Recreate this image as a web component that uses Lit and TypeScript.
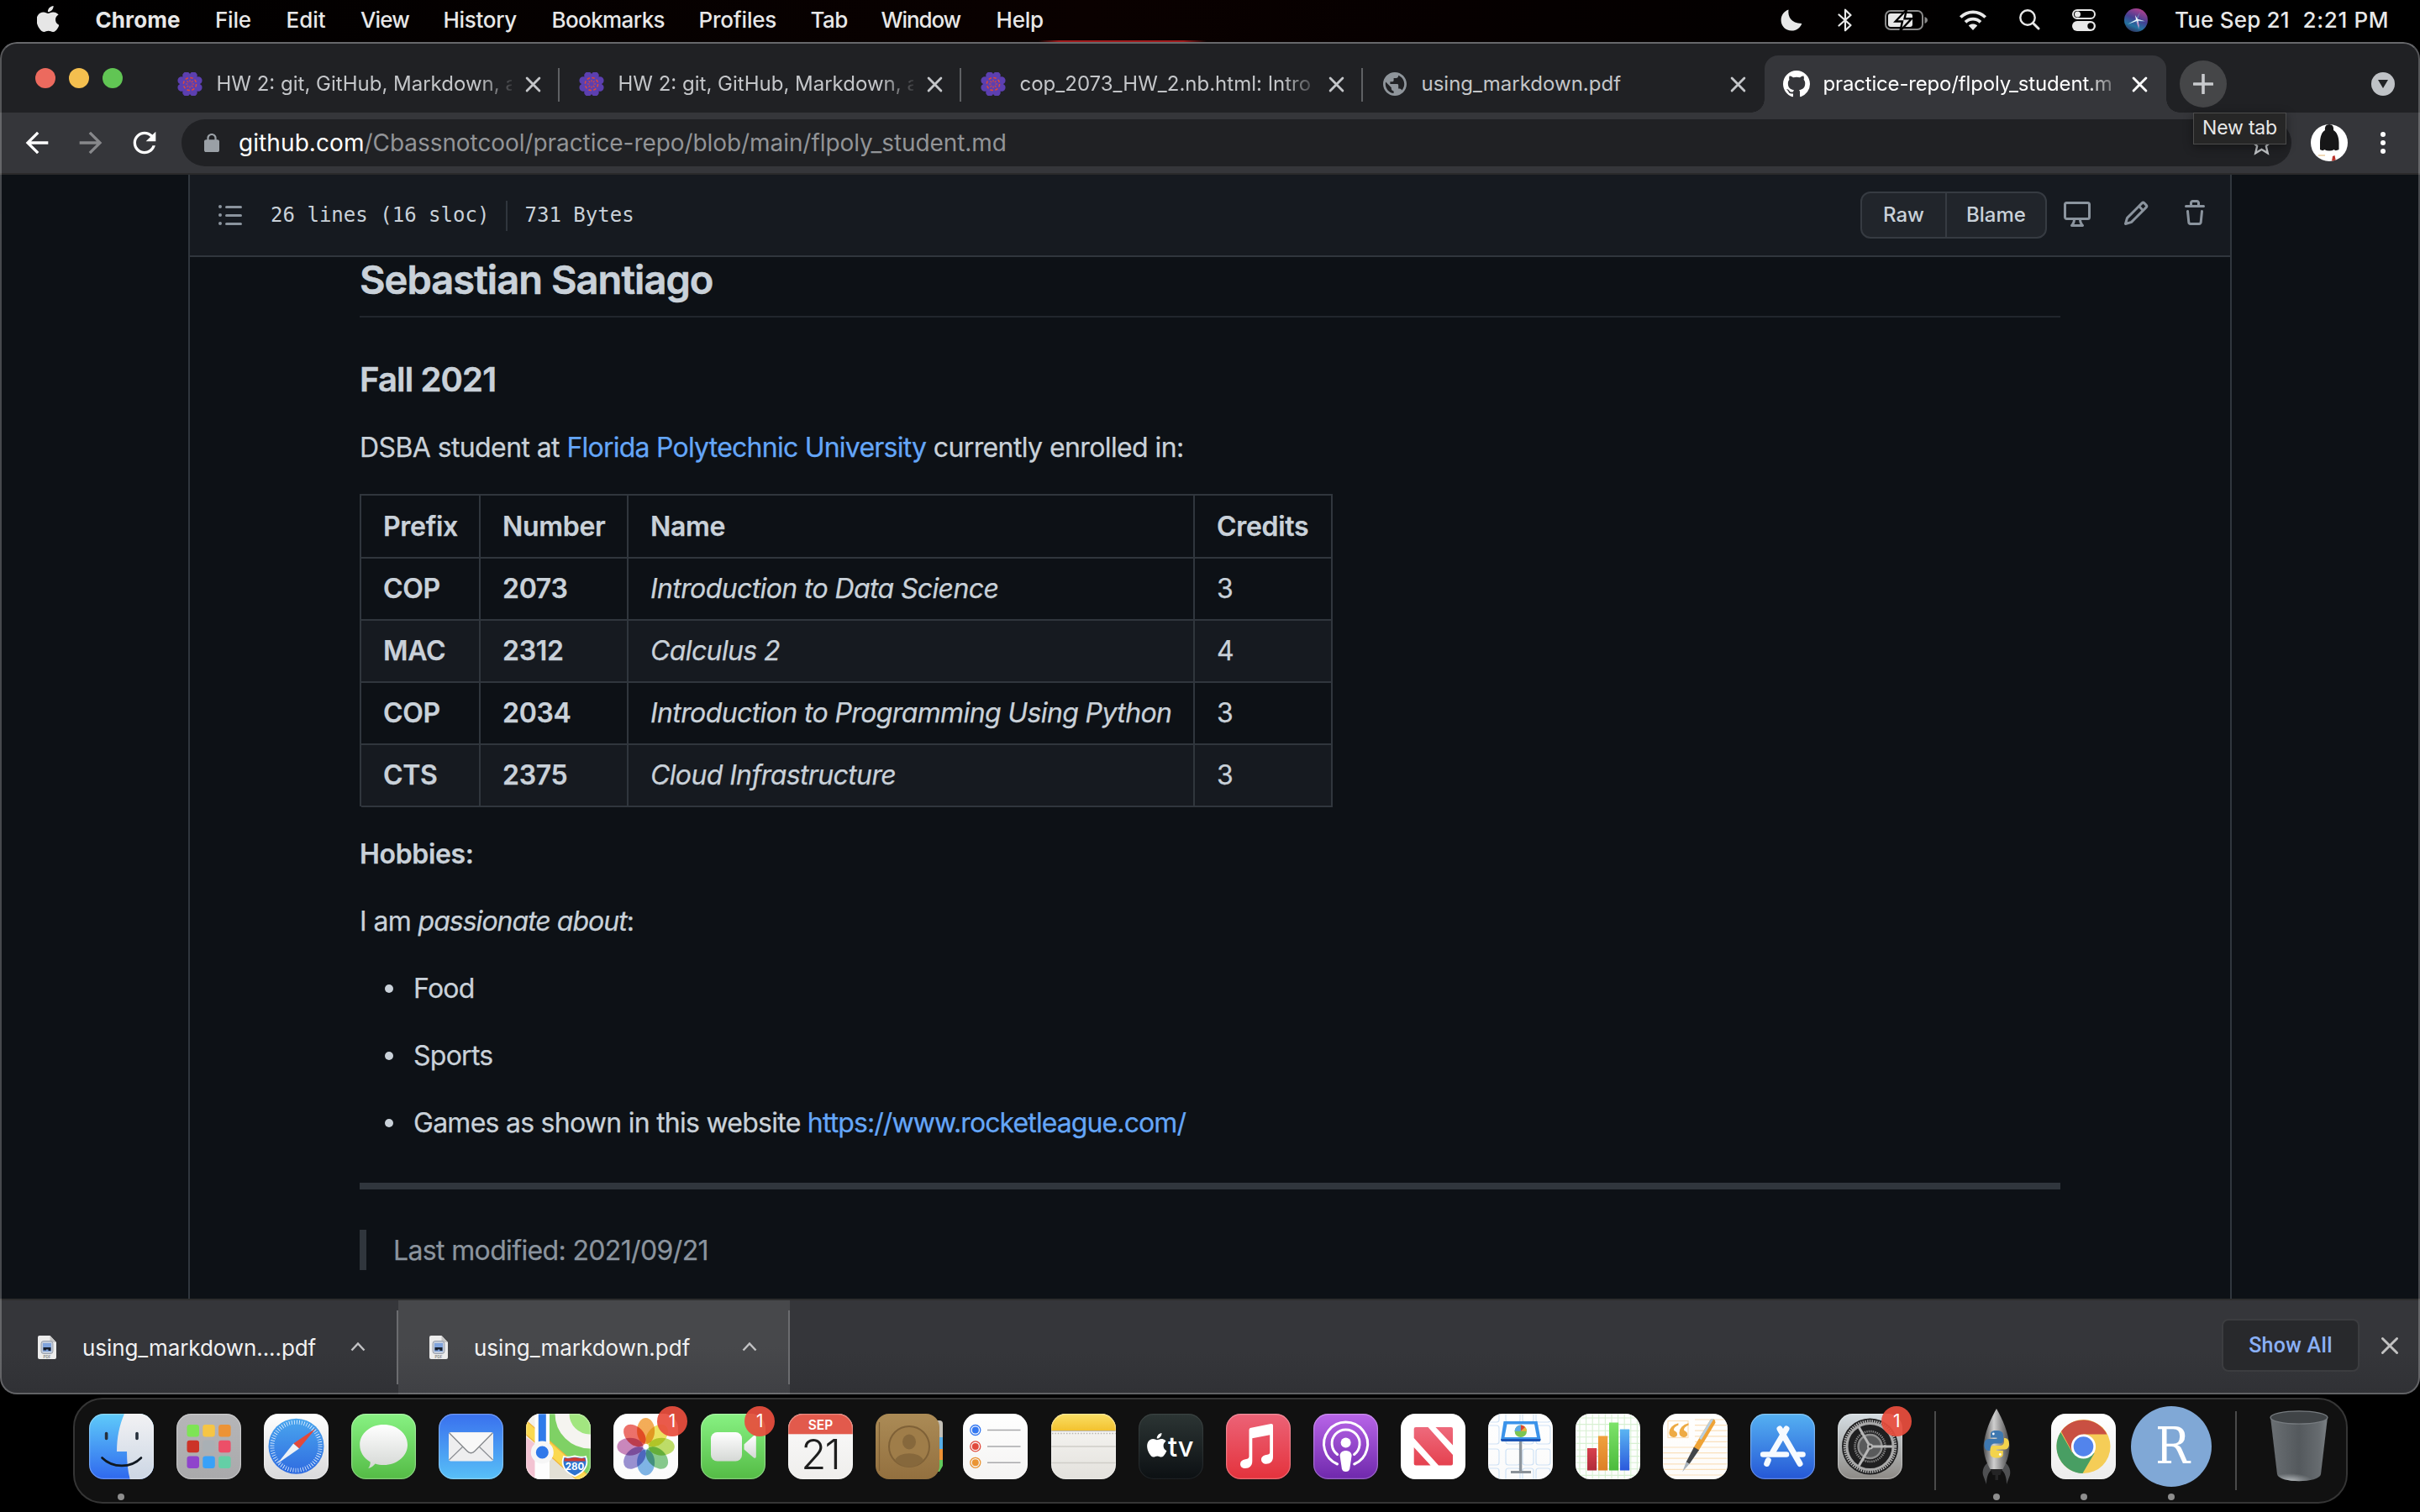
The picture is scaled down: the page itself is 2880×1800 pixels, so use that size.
import { LitElement, html, svg, css, nothing, type TemplateResult } from "lit";
import { customElement } from "lit/decorators.js";
import { classMap } from "lit/directives/class-map.js";
import { styleMap } from "lit/directives/style-map.js";

const APPLE =
  "M12.152 6.896c-.948 0-2.415-1.078-3.96-1.04-2.04.027-3.91 1.183-4.961 3.014-2.117 3.675-.546 9.103 1.519 12.09 1.013 1.454 2.208 3.09 3.792 3.039 1.52-.065 2.09-.987 3.935-.987 1.831 0 2.35.987 3.96.948 1.637-.026 2.676-1.48 3.676-2.948 1.156-1.688 1.636-3.325 1.662-3.415-.039-.013-3.182-1.221-3.22-4.857-.026-3.04 2.48-4.494 2.597-4.559-1.429-2.09-3.623-2.324-4.39-2.376-2-.156-3.675 1.09-4.61 1.09zM15.53 3.83c.843-1.012 1.4-2.427 1.245-3.83-1.207.052-2.662.805-3.532 1.818-.78.896-1.454 2.338-1.273 3.714 1.338.104 2.715-.688 3.559-1.701";
const GITHUB =
  "M8 0C3.58 0 0 3.58 0 8c0 3.54 2.29 6.53 5.47 7.59.4.07.55-.17.55-.38 0-.19-.01-.82-.01-1.49-2.01.37-2.53-.49-2.69-.94-.09-.23-.48-.94-.82-1.13-.28-.15-.68-.52-.01-.53.63-.01 1.08.58 1.23.82.72 1.21 1.87.87 2.33.66.07-.52.28-.87.51-1.07-1.78-.2-3.64-.89-3.64-3.95 0-.87.31-1.59.82-2.15-.08-.2-.36-1.02.08-2.12 0 0 .67-.21 2.2.82.64-.18 1.32-.27 2-.27.68 0 1.36.09 2 .27 1.53-1.04 2.2-.82 2.2-.82.44 1.1.16 1.92.08 2.12.51.56.82 1.27.82 2.15 0 3.07-1.87 3.75-3.65 3.95.29.25.54.73.54 1.48 0 1.07-.01 1.93-.01 2.2 0 .21.15.46.55.38A8.013 8.013 0 0016 8c0-4.42-3.58-8-8-8z";
const LIST =
  "M2 4a1 1 0 100-2 1 1 0 000 2zm3.75-1.5a.75.75 0 000 1.5h8.5a.75.75 0 000-1.5h-8.5zm0 5a.75.75 0 000 1.5h8.5a.75.75 0 000-1.5h-8.5zm0 5a.75.75 0 000 1.5h8.5a.75.75 0 000-1.5h-8.5zM3 8a1 1 0 11-2 0 1 1 0 012 0zm-1 6a1 1 0 100-2 1 1 0 000 2z";
const DESKTOP =
  "M1.75 2.5h12.5a.25.25 0 01.25.25v7.5a.25.25 0 01-.25.25H1.75a.25.25 0 01-.25-.25v-7.5a.25.25 0 01.25-.25zM14.25 1H1.75A1.75 1.75 0 000 2.75v7.5C0 11.216.784 12 1.75 12h3.727c-.1 1.041-.52 1.872-1.292 2.757A.75.75 0 004.75 16h6.5a.75.75 0 00.565-1.243c-.772-.885-1.193-1.716-1.292-2.757h3.727A1.75 1.75 0 0016 10.25v-7.5A1.75 1.75 0 0014.25 1zM9.018 12H6.982a5.72 5.72 0 01-.765 2.5h3.566a5.72 5.72 0 01-.765-2.5z";
const PENCIL =
  "M11.013 1.427a1.75 1.75 0 012.474 0l1.086 1.086a1.75 1.75 0 010 2.474l-8.61 8.61c-.21.21-.47.364-.756.445l-3.251.93a.75.75 0 01-.927-.928l.929-3.25a1.75 1.75 0 01.445-.758l8.61-8.61zm1.414 1.06a.25.25 0 00-.354 0L10.811 3.75l1.439 1.44 1.263-1.263a.25.25 0 000-.354l-1.086-1.086zM11.189 6.25L9.75 4.81l-6.286 6.287a.25.25 0 00-.064.108l-.558 1.953 1.953-.558a.249.249 0 00.108-.064l6.286-6.286z";
const TRASH =
  "M6.5 1.75a.25.25 0 01.25-.25h2.5a.25.25 0 01.25.25V3h-3V1.75zm4.5 0V3h2.25a.75.75 0 010 1.5H2.75a.75.75 0 010-1.5H5V1.75C5 .784 5.784 0 6.75 0h2.5C10.216 0 11 .784 11 1.75zM4.496 6.675a.75.75 0 10-1.492.15l.66 6.6A1.75 1.75 0 005.405 15h5.19c.9 0 1.652-.681 1.741-1.576l.66-6.6a.75.75 0 00-1.492-.149l-.66 6.6a.25.25 0 01-.249.225h-5.19a.25.25 0 01-.249-.225l-.66-6.6z";
const GLOBE =
  "M12 2C6.48 2 2 6.48 2 12s4.48 10 10 10 10-4.48 10-10S17.52 2 12 2zm-1 17.93c-3.95-.49-7-3.85-7-7.93 0-.62.08-1.21.21-1.79L9 15v1c0 1.1.9 2 2 2v1.93zm6.9-2.54c-.26-.81-1-1.39-1.9-1.39h-1v-3c0-.55-.45-1-1-1H8v-2h2c.55 0 1-.45 1-1V7h2c1.1 0 2-.9 2-2v-.41c2.93 1.19 5 4.06 5 7.41 0 2.08-.8 3.97-2.1 5.39z";
const BACK = "M20 11H7.83l5.59-5.59L12 4l-8 8 8 8 1.41-1.41L7.83 13H20v-2z";
const FORWARD = "M12 4l-1.41 1.41L16.17 11H4v2h12.17l-5.58 5.59L12 20l8-8z";
const RELOAD =
  "M17.65 6.35C16.2 4.9 14.21 4 12 4c-4.42 0-7.99 3.58-7.99 8s3.57 8 7.99 8c3.73 0 6.84-2.55 7.73-6h-2.08c-.82 2.33-3.04 4-5.65 4-3.31 0-6-2.69-6-6s2.69-6 6-6c1.66 0 3.14.69 4.22 1.78L13 11h7V4l-2.35 2.35z";
const LOCK =
  "M18 8h-1V6c0-2.76-2.24-5-5-5S7 3.24 7 6v2H6c-1.1 0-2 .9-2 2v10c0 1.1.9 2 2 2h12c1.1 0 2-.9 2-2V10c0-1.1-.9-2-2-2zM9 6c0-1.66 1.34-3 3-3s3 1.34 3 3v2H9V6z";
const STAR =
  "M22 9.24l-7.19-.62L12 2 9.19 8.63 2 9.24l5.46 4.73L5.82 21 12 17.27 18.18 21l-1.63-7.03L22 9.24zM12 15.4l-3.76 2.27 1-4.28-3.32-2.88 4.38-.38L12 6.1l1.71 4.04 4.38.38-3.32 2.88 1 4.28L12 15.4z";

const glyph = (d: string, size: number, box = "0 0 24 24") =>
  html`<svg class="glyph" width=${size} height=${size} viewBox=${box}><path d=${d} fill="currentColor" fill-rule="evenodd"></path></svg>`;

const cross = (size: number, stroke: number) =>
  html`<svg class="glyph" width=${size} height=${size} viewBox="0 0 18 18"><path d="M2 2L16 16M16 2L2 16" stroke="currentColor" stroke-width=${stroke} stroke-linecap="round"></path></svg>`;

const ray = (n: number, fn: (angle: number, i: number) => unknown) =>
  Array.from({ length: n }, (_, i) => fn((360 / n) * i, i));

const grad = (id: string, from: string, to: string) => svg`
  <linearGradient id=${id} x1="0" y1="0" x2="0" y2="1">
    <stop offset="0" stop-color=${from}></stop><stop offset="1" stop-color=${to}></stop>
  </linearGradient>`;

const canvasIcon = html`<svg class="glyph" width="32" height="28" viewBox="-16 -14 32 28">
  <g fill="#5c3fb0">
    <circle r="11"></circle>
    ${ray(8, (a) => svg`<circle cx="10.800" cy="0" r="4.600" transform="rotate(${a + 22.5})"></circle>`)}
  </g>
  <g fill="none" stroke="#dd4a3a" stroke-width="1.500">
    <circle r="7.600" stroke-dasharray="3.600 2.370"></circle>
    ${ray(8, (a) => svg`<path d="M2.500 0H5" stroke-width="1.100" transform="rotate(${a})"></path>`)}
  </g>
</svg>`;

interface MenuItem { label: string; width: number; spacing?: number }
const MENU: MenuItem[] = [
  { label: "Chrome", width: 142.5, spacing: 0.1 },
  { label: "File", width: 84.5, spacing: -0.2 },
  { label: "Edit", width: 88.5, spacing: 0 },
  { label: "View", width: 98.5, spacing: -0.9 },
  { label: "History", width: 129, spacing: -0.3 },
  { label: "Bookmarks", width: 175, spacing: -0.6 },
  { label: "Profiles", width: 133, spacing: -0.2 },
  { label: "Tab", width: 84, spacing: -0.6 },
  { label: "Window", width: 137, spacing: -1.1 },
  { label: "Help", width: 70, spacing: -0.2 },
];

const STATUS: { width: number; art: TemplateResult }[] = [
  { width: 64, art: html`<svg width="26" height="26" viewBox="0 0 26 26"><path d="M9.5.6C8.4 8.900 12.500 17 25.300 16.900C23.500 22.300 18.900 25.500 13.200 25.500C6 25.500.6 20 .6 13C.6 7.300 4 2.500 9.500.6z" fill="#e8e8e8"></path></svg>` },
  { width: 64, art: html`<svg width="18" height="28" viewBox="0 0 18 28"><path d="M1.500 7.500L15.500 20L9 26.300V1.700L15.500 8L1.500 20.500" fill="none" stroke="#e8e8e8" stroke-width="2.200" stroke-linejoin="round" stroke-linecap="round"></path></svg>` },
  { width: 82, art: html`<svg width="52" height="28" viewBox="0 0 52 28">
      <rect x="1" y="3" width="44" height="22" rx="6" fill="none" stroke="#8a8a8a" stroke-width="2"></rect>
      <path d="M47.500 10v8c2.200-.8 3.500-2.200 3.500-4s-1.300-3.200-3.500-4z" fill="#8a8a8a"></path>
      <rect x="4" y="6" width="29" height="16" rx="3" fill="#e8e8e8"></rect>
      <path d="M26 1.500L12.800 15.500H21L18.500 26.500L32 12.200H23.500z" fill="#e8e8e8" stroke="#000" stroke-width="2.400"></path></svg>` },
  { width: 76, art: html`<svg width="34" height="26" viewBox="0 0 34 26"><g fill="none" stroke="#e8e8e8" stroke-width="3.800">
      <path d="M2.300 9.500C10.500 1.200 23.500 1.200 31.700 9.500"></path><path d="M8 15.300C13 10.300 21 10.300 26 15.300"></path></g>
      <path d="M17 25L11.800 19.400C14.800 16.800 19.200 16.800 22.200 19.400z" fill="#e8e8e8"></path></svg>` },
  { width: 58, art: html`<svg width="25" height="25" viewBox="0 0 25 25"><g fill="none" stroke="#e8e8e8" stroke-linecap="round"><circle cx="10" cy="10" r="8.700" stroke-width="2.400"></circle><path d="M16.500 16.500L23 23" stroke-width="3"></path></g></svg>` },
  { width: 72, art: html`<svg width="28" height="26" viewBox="0 0 28 26"><rect x="1" y="1" width="26" height="10" rx="5" fill="none" stroke="#e8e8e8" stroke-width="2"></rect><circle cx="6.500" cy="6" r="3.500" fill="#e8e8e8"></circle>
      <rect x="0" y="14" width="28" height="12" rx="6" fill="#e8e8e8"></rect><circle cx="22" cy="20" r="3.700" fill="#000"></circle></svg>` },
  { width: 52, art: html`<svg width="28" height="28" viewBox="0 0 28 28">
      <defs>
        <linearGradient id="siri" x1=".7" y1="0" x2=".3" y2="1"><stop offset="0" stop-color="#b5408f"></stop><stop offset=".45" stop-color="#443f92"></stop><stop offset=".75" stop-color="#2472a0"></stop><stop offset="1" stop-color="#31305c"></stop></linearGradient>
      </defs>
      <circle cx="14" cy="14" r="14" fill="url(#siri)"></circle>
      <path d="M14 13L3.500 19L14 15.500L17.500 25.500L16.500 15L25.500 16L16 12.500L19 4z" fill="#6fd3e8" opacity=".55"></path>
      <path d="M14 13.500L5 18.500L15 14.800L18 23L16.500 14.500L24 15L16 12.800L13 8z" fill="#fff" opacity=".9"></path>
      <path d="M16 15L18 24.500L15.500 18z" fill="#ee6fb5"></path></svg>` },
];

interface TabInfo { title: string; icon: TemplateResult; fade: boolean; active?: boolean }
const TABS: TabInfo[] = [
  { title: "HW 2: git, GitHub, Markdown, a", icon: canvasIcon, fade: true },
  { title: "HW 2: git, GitHub, Markdown, a", icon: canvasIcon, fade: true },
  { title: "cop_2073_HW_2.nb.html: Intro", icon: canvasIcon, fade: true },
  { title: "using_markdown.pdf", icon: glyph(GLOBE, 28, "2 2 20 20"), fade: false },
  { title: "practice-repo/flpoly_student.m", icon: glyph(GITHUB, 32, "0 0 16 16"), fade: true, active: true },
];

const COURSES: [string, string, string, number][] = [
  ["COP", "2073", "Introduction to Data Science", 3],
  ["MAC", "2312", "Calculus 2", 4],
  ["COP", "2034", "Introduction to Programming Using Python", 3],
  ["CTS", "2375", "Cloud Infrastructure", 3],
];

/* Dock artwork is drawn in a 77 x 78 tile. */
const tile = (id: string, from: string, to: string, art: unknown, rim = 0.28) => html`
  <svg class="tile" width="77" height="78" viewBox="0 0 77 78">
    <defs>
      ${grad(`${id}-bg`, from, to)}
      <clipPath id="${id}-clip"><rect width="77" height="78" rx="17.500"></rect></clipPath>
      ${grad(`${id}-sheen`, "#ffffff", "#d5d8d5")}
    </defs>
    <g clip-path="url(#${id}-clip)">
      <rect width="77" height="78" fill="url(#${id}-bg)"></rect>
      ${art}
    </g>
    <rect x=".6" y=".6" width="75.800" height="76.800" rx="17" fill="none" stroke="#fff" stroke-opacity=${rim} stroke-width="1.200"></rect>
  </svg>`;

const finder = tile("finder", "#5fcbfa", "#2f68ee", svg`
  <defs>${grad("finder-face", "#f2f2f4", "#ccd6e4")}</defs>
  <path d="M42 0C36 14 33 28 33 45H45C45 57 46 68 48.700 78H77V0z" fill="url(#finder-face)"></path>
  <path d="M20.600 23.500v6M57 23.500v6" stroke="#26303c" stroke-width="3.600" stroke-linecap="round"></path>
  <path d="M15.500 52.500C28 65 50 65 62 52.500" fill="none" stroke="#101820" stroke-width="2.600" stroke-linecap="round"></path>`);

const padColors = ["#7ee455", "#f6c544", "#ec9336", "#cc3327", "#a9b0b5", "#ec4f68", "#8f44cc", "#39a1f8", "#64cfa6"];
const launchpad = tile("pad", "#b6b6b8", "#a9a9ab",
  padColors.map((c, i) => svg`<rect x=${12.500 + (i % 3) * 18.800} y=${13 + Math.floor(i / 3) * 18.700} width="14.500" height="14.500" rx="3.200" fill=${c}></rect>`));

const safari = tile("safari", "#ffffff", "#d9d9db", svg`
  <defs>${grad("safari-sea", "#4aa6ee", "#2f6be0")}</defs>
  <circle cx="38.500" cy="38.700" r="33" fill="url(#safari-sea)"></circle>
  <circle cx="38.500" cy="38.700" r="28.600" fill="none" stroke="#e8f3ff" stroke-width="5" stroke-dasharray=".8 2.200"></circle>
  <path d="M61.800 17.500L42 41.500L35.200 35.500z" fill="#e2493a"></path>
  <path d="M16 59.500L35.200 35.500L42 41.500z" fill="#eef2f6"></path>`);

const messages = tile("messages", "#88f283", "#54bb45", svg`
  <path d="M38.600 13c15.900 0 28.400 10.600 28.400 24S54.500 61 38.600 61c-3.600 0-7-.5-10-1.500-2 2.600-5 4.600-8.400 5.500 1.800-2.200 2.600-4.700 2.500-7.600C14.800 53 10.200 45.500 10.200 37c0-13.400 12.500-24 28.400-24z" fill="url(#messages-sheen)"></path>`);

const mail = tile("mail", "#3970ee", "#58c0f7", svg`
  <rect x="12" y="22" width="53" height="34.500" rx="2.500" fill="#eeeeef"></rect>
  <path d="M12.500 55L29.500 38.500M64.500 55L47.500 38.500" stroke="#8c8f94" stroke-width="1.200"></path>
  <path d="M12.800 23L34 44.500C36.500 47.500 40.500 47.500 43 44.500L64.200 23" fill="#f8f8f8" stroke="#85888c" stroke-width="1.300"></path>`);

const maps = tile("maps", "#f4f2ec", "#e6e3da", svg`
  <path d="M28 0H77V78H66L28 40z" fill="#7fd165"></path>
  <path d="M0 28L11 36V78H0z" fill="#f3c3d2"></path>
  <path d="M28 45L60 78H28z" fill="#e3e0d5"></path>
  <path d="M-4 13L18 32L76 84" fill="none" stroke="#f3b53c" stroke-width="14"></path>
  <path d="M-4 13L18 32L76 84" fill="none" stroke="#fbd950" stroke-width="11.500"></path>
  <circle cx="76" cy="0" r="33" fill="#a2e680" stroke="#f5f4f0" stroke-width="17"></circle>
  <path d="M10.500 0H28V78H10.500z" fill="#fdfdfd"></path>
  <path d="M19.300 0V46" stroke="#2f7bea" stroke-width="9"></path>
  <circle cx="19.300" cy="46" r="10.500" fill="#2f78ea" stroke="#f6f6f6" stroke-width="6"></circle>
  <path d="M45 51C50 53 54 51 58 50.500C62 51 66 53 71 51C74 58 73 68 58 74.500C43 68 42 58 45 51z" fill="#2e74cf" stroke="#fff" stroke-width="1.800"></path>
  <path d="M46.500 52.500C50 54 54 52.500 58 52C62 52.500 66 54 69.500 52.500L70.800 56.500H45.200z" fill="#cf3b32"></path>
  <text x="58" y="67" text-anchor="middle" class="shield">280</text>`);

const petals = ["#f29f3c", "#eae048", "#b4d850", "#74c27a", "#6caae4", "#8a80cc", "#c274b2", "#ea5a52"];
const photos = tile("photos", "#ffffff", "#fbfbfb",
  petals.map((c, i) => svg`<ellipse class="petal" cx="38.600" cy="20.500" rx="10.500" ry="15.500" fill=${c} fill-opacity=".86" transform="rotate(${i * 45} 38.600 39.200)"></ellipse>`));

const facetime = tile("facetime", "#88f283", "#54bb45", svg`
  <rect x="12" y="22" width="37" height="34.500" rx="7.500" fill="url(#facetime-sheen)"></rect>
  <path d="M51.500 36.500L62.500 26.500C64.500 25 65.800 25.800 65.800 28V50.500C65.800 53 64.500 53.500 62.500 52L51.500 42.500z" fill="url(#facetime-sheen)"></path>`);

const calendar = tile("calendar", "#fbfbfb", "#efeeec", svg`
  <rect width="77" height="24.300" fill="#e25a4c"></rect>
  <text x="38.500" y="18.500" text-anchor="middle" class="month">SEP</text>
  <text x="38" y="66" text-anchor="middle" class="day">21</text>`);

const contacts = html`<svg class="tile" width="77" height="78" viewBox="0 0 77 78">
  <defs>${grad("contacts-bg", "#ab8b56", "#93703f")}</defs>
  <path d="M70 8H76a4 4 0 0 1 4 4V28H70z" fill="#c3bfb6"></path><path d="M70 28H80V42H70z" fill="#56aee8"></path>
  <path d="M70 42H80V55H70z" fill="#ee9234"></path><path d="M70 55H80V62L76 69H70z" fill="#62c95b"></path>
  <rect width="76" height="78" rx="16" fill="url(#contacts-bg)"></rect>
  <path d="M4.500 10V68" stroke="#7f6135" stroke-width="1.200"></path>
  <circle cx="40" cy="39" r="24" fill="#9f7d49" stroke="#7f6137" stroke-width="2"></circle>
  <ellipse cx="40" cy="33.500" rx="8" ry="9" fill="#86683c"></ellipse>
  <path d="M23 55.500C27 44.500 53 44.500 57 55.500C47 66 33 66 23 55.500z" fill="#86683c"></path>
</svg>`;

const reminders = tile("reminders", "#ffffff", "#f4f3f2",
  ["#3478f1", "#e14a3c", "#ea9434"].map((c, i) => svg`
    <circle cx="14.800" cy=${19.500 + i * 19.400} r="6" fill="none" stroke=${c} stroke-width="1.300"></circle>
    <circle cx="14.800" cy=${19.500 + i * 19.400} r="4" fill=${c}></circle>
    <path d="M29 ${19.500 + i * 19.400}H68.500" stroke="#a9a9ab" stroke-width="1.500"></path>`));

const notes = tile("notes", "#f9f8f6", "#e3e1dc", svg`
  <defs>${grad("notes-top", "#fadf66", "#f3c22f")}</defs>
  <rect width="77" height="20" fill="url(#notes-top)"></rect>
  <path d="M0 20.500H77" stroke="#b9b4a6" stroke-width="1.200"></path>
  <path d="M1 23.500H77" stroke="#b7b5b0" stroke-width="1.600" stroke-dasharray="1.500 1.900"></path>
  <path d="M0 39H77M0 58.500H77" stroke="#cfcdc8" stroke-width="1.300"></path>`);

const tv = tile("tv", "#2c3534", "#0c1013", svg`
  <path d=${APPLE} transform="translate(7.500 23) scale(1.190)" fill="#fff"></path>
  <text x="35" y="51" class="tv" textLength="30.500" lengthAdjust="spacingAndGlyphs">tv</text>`, 0.07);

const music = tile("music", "#ec6377", "#e4323c", svg`
  <path d="M27.500 19.500C27.500 17.800 28.500 17 30 16.700L53.500 12C55 11.700 56 12.500 56 14V51.500C56 57 52.500 59.700 48 59.700C44.500 59.700 42 57.600 42 54.700C42 51.500 44.200 49.800 48 49C51.300 48.300 52.200 47.900 52.200 45.500V25.200L31.300 29.300V56.500C31.300 62 28 65 23 65C19.500 65 17 62.900 17 59.900C17 56.800 19.200 55 23 54.200C26.500 53.500 27.500 53 27.500 50.500z" fill="#fff"></path>`);

const podcasts = tile("podcasts", "#b865e8", "#6f28ac", svg`
  <g fill="none" stroke="#fff" stroke-width="3" stroke-linecap="round">
    <path d="M28.500 60A26 26 0 1 1 48.700 60"></path><path d="M28.600 48.500A16.500 16.500 0 1 1 48.600 48.500"></path></g>
  <circle cx="38.600" cy="34.500" r="6" fill="#fff"></circle>
  <path d="M31.600 50C31.600 42 45.600 42 45.600 50L43.300 65.500C42.500 70.300 34.700 70.300 33.900 65.500z" fill="#fff"></path>`);

const news = tile("news", "#ffffff", "#ffffff", svg`
  <defs>${grad("news-red", "#ee6a7c", "#e5414f")}</defs>
  <path d="M18 16H32.500L62 49V59.500Q62 61.500 60 61.500H45L15.700 29V18Q15.700 16 18 16zM41.500 16H60Q62 16 62 18V37.500zM15.700 40L35.500 61.500H18Q15.700 61.500 15.700 59.500z" fill="url(#news-red)"></path>`);

const keynote = tile("keynote", "#ffffff", "#fafafa", svg`
  <g fill="none" stroke="#cfe2f5" stroke-width="1.200">
    ${[-4, 21, 41, 57].map((x) => [-12, 14, 42, 65].map((y) => svg`<rect x=${x} y=${y} width=${x === 41 ? 13 : 17} height=${y === 42 ? 19 : 22} rx="3"></rect>`))}
  </g>
  <path d="M38.600 32V68" stroke="#8d959d" stroke-width="3.400"></path>
  <path d="M27 69.500H51" stroke="#8b9299" stroke-width="2.800"></path>
  <path d="M18.500 9H58.500L62.500 30.500Q62.600 33 60.500 33H17Q15 33 15.200 30.500z" fill="#3b93ea"></path>
  <path d="M15.200 30H62.400V31.500Q62 33 60.500 33H17Q15 33 15.200 30z" fill="#1c55b5"></path>
  <path d="M22.500 12.500H55L58 28H19.500z" fill="#fafdff"></path>
  <circle cx="38.800" cy="20.800" r="7.200" fill="#7cc552"></circle>
  <path d="M38.800 20.800V13.600A7.200 7.200 0 0 1 46 20.800z" fill="#e9b13b"></path>
  <path d="M38.800 20.800V13.600A7.200 7.200 0 0 1 44 16z" fill="#d9473a"></path>
  <path d="M38.800 20.800L31.600 20.800A7.200 7.200 0 0 1 38.800 13.600z" fill="#5aa7e8"></path>`);

const bars = [["#d8404d", "#b02a3a", 14, 41], ["#f0a13e", "#dd7f26", 27, 26.500], ["#7de36a", "#4cbb3c", 40, 10.500], ["#5bb5f2", "#2b59dc", 53, 18.500]] as const;
const numbers = tile("numbers", "#ffffff", "#fbfdfb", svg`
  <g stroke="#d7f0d2" stroke-width="1.100">
    ${Array.from({ length: 10 }, (_, i) => svg`<path d="M${5 + i * 7.600} 0V78M0 ${5 + i * 7.600}H77"></path>`)}
  </g>
  ${bars.map(([a, b, x, y], i) => svg`<defs>${grad(`bar${i}`, a, b)}</defs><rect x=${x} y=${y} width="11.200" height=${67.500 - y} fill="url(#bar${i})"></rect>`)}`);

const pages = tile("pages", "#ffffff", "#fdfbf8", svg`
  <g stroke="#fae0bb" stroke-width="1.200">
    ${Array.from({ length: 11 }, (_, i) => svg`<path d="M${i < 5 ? 38 : 0} ${7 + i * 6.600}H77"></path>`)}
    <rect x="6" y="8.500" width="24" height="20" fill="none"></rect>
  </g>
  <text x="18.500" y="48" text-anchor="middle" class="quote">“</text>
  <g transform="rotate(31 42 38)">
    <path d="M38.500 4Q42 -1 45.500 4V44H38.500z" fill="#efa336"></path>
    <path d="M38.500 4Q40 1.500 41.500 1V30H38.500z" fill="#b9cfe0"></path>
    <path d="M38.500 42H45.500L44.300 62H39.700z" fill="#43464a"></path>
    <path d="M39.700 62H44.300L42 74.500z" fill="#a9b2ba"></path>
  </g>`);

const appstore = tile("appstore", "#55b1f2", "#2557d6", svg`
  <g stroke="#f6faff" stroke-width="7" stroke-linecap="round">
    <path d="M35 18L59 59.500M43 18L26.500 46M21.300 55.500L19.700 59.500"></path>
    <path d="M15.200 48.500H43M57 48.500H62.500" stroke-width="6.600"></path>
  </g>`);

const settings = tile("settings", "#d5dde2", "#8d8a86", svg`
  <circle cx="38.500" cy="39" r="33.500" fill="#1f1f20"></circle>
  <circle cx="38.500" cy="39" r="30" fill="none" stroke="#b3b3b3" stroke-width="3.500" stroke-dasharray="1.500 1.200"></circle>
  <circle cx="38.500" cy="39" r="27.500" fill="none" stroke="#a9a9a9" stroke-width="3"></circle>
  <circle cx="38.500" cy="39" r="18" fill="none" stroke="#868686" stroke-width="2.600" stroke-dasharray="1.400 1.100"></circle>
  <circle cx="38.500" cy="39" r="14" fill="#595a5b" stroke="#8e8e8e" stroke-width="2.500"></circle>
  ${ray(3, (a) => svg`<path d="M38.500 39H65" stroke="#b8b8b8" stroke-width="3" transform="rotate(${a} 38.500 39)"></path>`)}
  <circle cx="38.500" cy="39" r="3.600" fill="#b5b5b5"></circle><circle cx="38.500" cy="39" r="1.500" fill="#333"></circle>`);

const rocket = html`<svg class="tile rocket" width="36" height="92" viewBox="0 0 36 92">
  <defs><linearGradient id="hull"><stop offset="0" stop-color="#4b4b4c"></stop><stop offset=".4" stop-color="#d0d0d0"></stop><stop offset="1" stop-color="#474748"></stop></linearGradient></defs>
  <path d="M8 64C2 68 1 75 2 79L6 90C6 82 8 76 12 73zM28 64C34 68 35 75 34 79L30 90C30 82 28 76 24 73z" fill="#4f5052"></path>
  <path d="M18 0C25 12 32 28 33.500 44C33.500 56 29 66 25.500 72H10.500C7 66 2.500 56 2.500 44C4 28 11 12 18 0z" fill="url(#hull)"></path>
  <path d="M11 72H25L22.500 79H20V85H16.500V79H13.500z" fill="#242425"></path>
  <path d="M17.500 26C11.500 26 11 28.500 11 31V34.500H18.500V36H8.500C5 36 3.500 39 3.500 43C3.500 47 5 50 8.500 50H11V46C11 43 13 41.500 16 41.500H22C24.500 41.500 26 40 26 37.500V31C26 28 23.500 26 17.500 26z" fill="#3f78b0"></path>
  <path d="M19 58.500C25 58.500 25.800 56 25.800 53.500V50H18V48.500H28C31.500 48.500 33 45.500 33 42C33 38 31.500 35 28 35H27V39C27 42 25 44 22 44H15C12 44 10.500 46 10.500 48.500V53.500C10.500 56.500 13 58.500 19 58.500z" fill="#f3d34d"></path>
  <circle cx="14.300" cy="30" r="1.400" fill="#fff"></circle><circle cx="22.300" cy="54.500" r="1.400" fill="#fff"></circle>
</svg>`;

const chrome = tile("chrome", "#ffffff", "#ececec", svg`
  <circle cx="38.500" cy="39" r="32" fill="#f5cd57"></circle>
  <path d="M38.500 39L12 21A32 32 0 0 1 66.500 24.500H38.500z" fill="#c95042"></path>
  <path d="M11.300 22A32 32 0 0 0 37.500 71L51.500 47L38.500 39L25 46z" fill="#489e63"></path>
  <path d="M12 21.300L25.500 46L38.500 24.500z" fill="#c95042"></path>
  <circle cx="38.500" cy="39" r="14.600" fill="#fff"></circle><circle cx="38.500" cy="39" r="11.800" fill="#5284ec"></circle>`);

const rstudio = html`<svg class="tile round" width="96" height="96" viewBox="0 0 96 96">
  <circle cx="48" cy="48" r="48" fill="#80a8d6"></circle>
  <text x="29" y="67.500" class="r" textLength="41" lengthAdjust="spacingAndGlyphs">R</text></svg>`;

const bin = html`<svg class="tile bin" width="70" height="86" viewBox="0 0 70 86">
  <defs><linearGradient id="can"><stop offset="0" stop-color="#6a6f73"></stop><stop offset=".5" stop-color="#54595d"></stop><stop offset=".85" stop-color="#666b6f"></stop><stop offset="1" stop-color="#7d8286"></stop></linearGradient>
  <radialGradient id="glow" cx=".3" cy="1" r=".5"><stop offset="0" stop-color="#b5babd"></stop><stop offset="1" stop-color="#b5babd" stop-opacity="0"></stop></radialGradient></defs>
  <path d="M1 8L9 76C11 87 59 87 61 76L69 8z" fill="url(#can)"></path>
  <path d="M8 66L9 76C11 87 59 87 61 76L62 66z" fill="url(#glow)"></path>
  <ellipse cx="35" cy="8.500" rx="34" ry="7.700" fill="#404447" stroke="#777c80" stroke-width="1.300"></ellipse>
</svg>`;

interface DockApp { art: TemplateResult; badge?: number; running?: boolean }
const APPS: DockApp[] = [
  { art: finder, running: true }, { art: launchpad }, { art: safari }, { art: messages }, { art: mail }, { art: maps },
  { art: photos, badge: 1 }, { art: facetime, badge: 1 }, { art: calendar }, { art: contacts }, { art: reminders }, { art: notes },
  { art: tv }, { art: music }, { art: podcasts }, { art: news }, { art: keynote }, { art: numbers }, { art: pages }, { art: appstore },
  { art: settings, badge: 1 },
];
const OPEN_APPS: DockApp[] = [{ art: rocket, running: true }, { art: chrome, running: true }, { art: rstudio, running: true }];

@customElement("mac-menubar")
export class MacMenubar extends LitElement {
  static styles = css`
    :host { display: flex; align-items: center; height: 50px; padding: 0 0 3px 44px; box-sizing: border-box; color: #e8e8e8; background: linear-gradient(90deg, #000, #0a0100 45%, #060000 60%, #000 85%); font: 500 26px/40px Inter, "Liberation Sans", sans-serif; white-space: pre; position: relative; }
    :host::after { content: ""; position: absolute; left: 1236px; top: 48px; width: 200px; height: 2px; background: linear-gradient(90deg, transparent, #a01a1c 12%, #a01a1c 86%, transparent); }
    .apple { width: 69.500px; height: 31px; display: flex; margin-top: -2px; }
    .first { font-weight: 700; }
    .status { margin-left: auto; display: flex; align-items: center; }
    .slot { display: flex; justify-content: center; }
    .clock { display: flex; width: 312px; padding-left: 20px; box-sizing: border-box; }
    .date { width: 152.500px; letter-spacing: 0.200px; }
    .time { letter-spacing: 0.650px; }
  `;
  render() {
    return html`
      <span class="apple"><svg width="26" height="31" viewBox="2.600 0 18.800 24" preserveAspectRatio="none"><path d=${APPLE} fill="#e6e6e6"></path></svg></span>
      ${MENU.map((m, i) => html`<span class=${i ? "item" : "first"} style=${styleMap({ width: `${m.width}px`, letterSpacing: `${m.spacing}px` })}>${m.label}</span>`)}
      <div class="status">
        ${STATUS.map((s) => html`<span class="slot" style=${styleMap({ width: `${s.width}px` })}>${s.art}</span>`)}
        <span class="clock"><span class="date">Tue Sep 21</span><span class="time">2:21 PM</span></span>
      </div>`;
  }
}

@customElement("browser-tabs")
export class BrowserTabs extends LitElement {
  static styles = css`
    :host { display: flex; height: 82px; background: #202124; font: 400 24px/34px Inter, "Liberation Sans", sans-serif; }
    .glyph { display: block; }
    .lights { display: flex; gap: 16px; padding: 29px 0 0 42px; width: 146px; }
    .light { width: 24px; height: 24px; border-radius: 50%; }
    .red { background: #ec6a5e; } .yellow { background: #f4bf4f; } .green { background: #61c554; }
    .tab { display: grid; grid-template-columns: 32px 351px 19px; column-gap: 16px; align-items: center; width: 478px; height: 68px; margin-top: 14px; padding-left: 21.500px; box-sizing: border-box; color: #c4c6c9; position: relative; }
    .tab.split::after { content: ""; position: absolute; right: 0; top: 15px; width: 2px; height: 40px; background: #5f6164; }
    .tab.active { background: #35363a; color: #fff; border-radius: 16px 16px 0 0; }
    .tab.active::before, .tab.active::after { content: ""; position: absolute; bottom: 0; width: 16px; height: 16px; }
    .tab.active::before { left: -16px; background: radial-gradient(circle at 0 0, transparent 15.500px, #35363a 16px); }
    .tab.active::after { right: -16px; background: radial-gradient(circle at 100% 0, transparent 15.500px, #35363a 16px); }
    .icon { display: flex; justify-content: center; }
    .tab.plain .icon { color: #8f959b; }
    .title { white-space: nowrap; }
    .active .title { letter-spacing: -0.170px; }
    .fade .title { mask-image: linear-gradient(90deg, #000 89%, transparent 102%); -webkit-mask-image: linear-gradient(90deg, #000 89%, transparent 102%); }
    .new { width: 56px; height: 56px; margin: 20px 0 0 15.500px; border-radius: 50%; background: #454648; color: #c8cacd; display: flex; align-items: center; justify-content: center; }
    .search { width: 28px; height: 28px; margin: 34px 30px 0 auto; border-radius: 50%; background: #bfc2c6; display: flex; align-items: center; justify-content: center; }
  `;
  render() {
    return html`
      <div class="lights"><span class="light red"></span><span class="light yellow"></span><span class="light green"></span></div>
      ${TABS.map((t, i) => html`
        <div class=${classMap({ tab: true, fade: t.fade, active: !!t.active, plain: !t.active, split: i < 3 })}>
          <span class="icon">${t.icon}</span><span class="title">${t.title}</span>${cross(19, 2.7)}
        </div>`)}
      <span class="new"><svg width="24" height="24" viewBox="0 0 24 24"><path d="M12 1V23M1 12H23" stroke="currentColor" stroke-width="3.600" stroke-linecap="round"></path></svg></span>
      <span class="search"><svg width="14" height="12" viewBox="0 0 14 12"><path d="M1 1H13L7 11z" fill="#202124"></path></svg></span>`;
  }
}

@customElement("browser-toolbar")
export class BrowserToolbar extends LitElement {
  static styles = css`
    :host { display: flex; align-items: center; height: 74px; box-sizing: border-box; border-bottom: 2px solid #2a2a2b; background: #35363a; padding-left: 24px; color: #fff; position: relative; font: 400 28px/40px Inter, "Liberation Sans", sans-serif; }
    .glyph { display: block; }
    .nav { display: flex; gap: 24px; width: 192px; }
    .off { color: #87888b; }
    .address { display: flex; align-items: center; width: 2511px; height: 56px; border-radius: 28px; background: #202124; box-sizing: border-box; padding-left: 27px; }
    .lock { color: #9aa0a6; display: flex; width: 41px; }
    .host { letter-spacing: 0.080px; }
    .path { color: #929497; letter-spacing: -0.070px; }
    .star { margin: 2px 18px 0 auto; color: #c2c5c8; }
    .avatar { display: flex; margin-left: 23px; }
    .more { display: grid; gap: 3.500px; margin-left: 38.500px; }
    .dot { width: 6.600px; height: 6.600px; border-radius: 50%; background: #fff; }
    .tip { position: absolute; left: 2610px; top: 0; width: 111px; height: 38px; box-sizing: border-box; border: 1.500px solid #4c4c4c; background: #262626; color: #e8e8e8; font-size: 23px; line-height: 35px; letter-spacing: -0.190px; text-align: center; box-shadow: 0 3px 12px rgba(0, 0, 0, 0.400); }
  `;
  render() {
    return html`
      <div class="nav">${glyph(BACK, 40)}<span class="off">${glyph(FORWARD, 40)}</span>${glyph(RELOAD, 40)}</div>
      <div class="address">
        <span class="lock"><svg width="18" height="22" viewBox="4 1 16 21" preserveAspectRatio="none"><path d=${LOCK} fill="currentColor"></path></svg></span>
        <span class="host">github.com</span><span class="path">/Cbassnotcool/practice-repo/blob/main/flpoly_student.md</span>
        <span class="star">${glyph(STAR, 35)}</span>
      </div>
      <span class="avatar"><svg width="44" height="44" viewBox="0 0 44 44">
        <defs><clipPath id="face"><circle cx="22" cy="22" r="22"></circle></clipPath></defs>
        <g clip-path="url(#face)"><rect width="44" height="44" fill="#fff"></rect>
          <path d="M22 0C26 0 27.500 3 27 7C31 9 33.500 15 33.500 22V30C31 31 29 32 28 30C24 32 20 32 16 30C15 32 13 31 11 30V22C11 15 13 9 17 7C16.500 3 18 0 22 0z" fill="#161617"></path>
          <path d="M26 38L28.500 37L30 44H25z" fill="#b8322a"></path><path d="M9 36H17V38H9z" fill="#f0d9b8"></path></g></svg></span>
      <span class="more"><i class="dot"></i><i class="dot"></i><i class="dot"></i></span>
      <span class="tip">New tab</span>`;
  }
}

@customElement("repo-file")
export class RepoFile extends LitElement {
  static styles = css`
    :host { display: block; height: 1338px; overflow: hidden; background: #0d1116; color: #c9d1d9; font: 400 32px/46px Inter, "Liberation Sans", sans-serif; letter-spacing: -0.600px; }
    .glyph { display: block; }
    .box { width: 2432px; height: 100%; margin-left: 224px; box-sizing: border-box; border: solid #30363d; border-width: 0 2px; }
    .head { display: flex; align-items: center; height: 98px; box-sizing: border-box; border-bottom: 2px solid #30363d; background: #161a20; padding: 0 26px 0 32px; color: #8b949e; }
    .meta { display: flex; align-items: center; margin: -1px 0 0 32px; font: 400 24px/36px "DejaVu Sans Mono", "Liberation Mono", monospace; letter-spacing: 0.020px; color: #c9d1d9; }
    .rule { width: 2px; height: 36px; margin: 2px 20px 0 20px; background: #30363d; }
    .buttons { display: flex; margin: 0 20px 0 auto; height: 56px; width: 222px; box-sizing: border-box; border: 2px solid #363b42; border-radius: 12px; background: #21252b; color: #c9d1d9; font: 500 24px/52px Inter, sans-serif; letter-spacing: 0; text-align: center; }
    .raw { width: 99px; border-right: 2px solid #363b42; }
    .blame { flex: 1; }
    .tools { display: flex; gap: 38px; margin-top: -4px; }
    .doc { margin: 0 202px; -webkit-text-stroke: 0.250px currentColor; }
    h1 { margin: 0; height: 72px; box-sizing: border-box; border-bottom: 2px solid #21262d; font: 600 47px/53px Inter, sans-serif; letter-spacing: -0.950px; -webkit-text-stroke-width: 0.600px; }
    h2 { margin: 49px 0 31px; font: 600 40px/50px Inter, sans-serif; letter-spacing: -0.850px; -webkit-text-stroke-width: 0.500px; }
    p { margin: 0 0 32px; padding-top: 2px; }
    a { color: #64a6f8; text-decoration: none; letter-spacing: -0.760px; -webkit-text-stroke-color: #64a6f8; }
    b { font-weight: 600; letter-spacing: -0.350px; }
    .table { width: 1158px; box-sizing: border-box; border: solid #30363d; border-width: 2px 0 0 2px; margin-bottom: 32px; }
    .row { display: grid; grid-template-columns: 142px 176px 674px 164px; height: 74px; }
    .row.alt { background: #161a20; }
    .cell { border: solid #30363d; border-width: 0 2px 2px 0; padding-left: 26px; line-height: 73px; white-space: nowrap; }
    .strong { font-weight: 600; letter-spacing: -0.300px; }
    em { letter-spacing: -0.620px; }
    .tight { letter-spacing: -1px; }
    ul { list-style: none; margin: 0 0 48px; padding: 0; }
    li { display: flex; align-items: center; padding: 2px 0 0 30px; margin-bottom: 32px; }
    li::before { content: ""; width: 10px; height: 10px; border-radius: 50%; background: #c9d1d9; margin-right: 24px; }
    li:last-child { margin-bottom: 0; }
    .item { white-space: pre; letter-spacing: -0.740px; }
    .item a { letter-spacing: -0.900px; }
    .bar { height: 8px; background: #30363d; margin-bottom: 48px; }
    .quote { border-left: 8px solid #30363d; padding: 2px 0 0 32px; color: #8b949e; letter-spacing: -0.640px; -webkit-text-stroke-color: #8b949e; }
  `;
  render() {
    return html`
      <div class="box">
        <div class="head">
          ${glyph(LIST, 32, "0 0 16 16")}
          <div class="meta"><span>26 lines (16 sloc)</span><span class="rule"></span><span>731 Bytes</span></div>
          <div class="buttons"><span class="raw">Raw</span><span class="blame">Blame</span></div>
          <div class="tools">${[DESKTOP, PENCIL, TRASH].map((d) => glyph(d, 32, "0 0 16 16"))}</div>
        </div>
        <div class="doc">
          <h1>Sebastian Santiago</h1>
          <h2>Fall 2021</h2>
          <p>DSBA student at <a>Florida Polytechnic University</a> currently enrolled in:</p>
          <div class="table">
            <div class="row">${["Prefix", "Number", "Name", "Credits"].map((h) => html`<span class="cell strong">${h}</span>`)}</div>
            ${COURSES.map(([prefix, number, name, credits], i) => html`
              <div class=${classMap({ row: true, alt: i % 2 === 1 })}>
                <span class="cell strong">${prefix}</span><span class="cell strong">${number}</span>
                <span class="cell"><em>${name}</em></span><span class="cell">${credits}</span>
              </div>`)}
          </div>
          <p><b>Hobbies:</b></p>
          <p>I am <em class="tight">passionate about</em>:</p>
          <ul>
            <li><span class="item">Food</span></li>
            <li><span class="item">Sports</span></li>
            <li><span class="item">Games as shown in this website <a>https://www.rocketleague.com/</a></span></li>
          </ul>
          <div class="bar"></div>
          <div class="quote">Last modified: 2021/09/21</div>
        </div>
      </div>`;
  }
}

@customElement("download-shelf")
export class DownloadShelf extends LitElement {
  static styles = css`
    :host { display: flex; height: 114px; box-sizing: border-box; border-top: 2px solid #2d2d2d; background: linear-gradient(#35363a 55%, #303135); color: #f1f1f2; font: 400 26px/40px Inter, "Liberation Sans", sans-serif; }
    .glyph { display: block; }
    .file { display: flex; align-items: center; box-sizing: border-box; height: 112px; padding: 0 0 1px 45px; position: relative; }
    .file::after { content: ""; position: absolute; right: 0; top: 12px; width: 2px; height: 88px; background: #6b6c6f; }
    .one { width: 474px; }
    .one .name { letter-spacing: -0.080px; }
    .two { width: 466px; background: linear-gradient(#47484b 50%, #3f4044); padding-left: 37px; }
    .name { margin-left: 31px; padding-top: 2px; }
    .up { margin-left: auto; margin-right: 39px; margin-top: -1px; }
    .all { margin: 22px 25px 0 auto; width: 164px; height: 63px; box-sizing: border-box; border: 2px solid #3c3d40; border-radius: 8px; background: #28292c; color: #8ab0f6; font: 500 25px/59px Roboto, sans-serif; letter-spacing: 0.300px; text-align: center; }
    .close { margin: 43px 25px 0 0; color: #c2c2c2; }
  `;
  private file(name: string, cls: string) {
    return html`<div class="file ${cls}">
      <svg width="22" height="28" viewBox="0 0 22 28">
        <path d="M2 0H14.500L22 8V26Q22 28 20 28H2Q0 28 0 26V2Q0 0 2 0z" fill="#ececec"></path>
        <path d="M14.500 0L22 8H16Q14.500 8 14.500 6.500z" fill="#c6c6c6"></path>
        <rect x="4" y="6.500" width="14" height="15" rx="3" fill="#c3ccdb" stroke="#8b929d" stroke-width=".8"></rect>
        <rect x="6" y="9" width="10" height="10" fill="#7fa3dc"></rect><path d="M6.500 14H15.500V18H12.500V16.500H10V17.500H6.500z" fill="#18202e"></path>
        <text x="11" y="26.500" text-anchor="middle" font-size="4.500" font-weight="700" fill="#8a8a8a">PDF</text>
      </svg>
      <span class="name">${name}</span>
      <svg class="up" width="18" height="12" viewBox="0 0 18 12"><path d="M1.500 10.500L9 2.500L16.500 10.500" fill="none" stroke="#c2c2c4" stroke-width="2.500"></path></svg>
    </div>`;
  }
  render() {
    return html`${this.file("using_markdown....pdf", "one")}${this.file("using_markdown.pdf", "two")}
      <span class="all">Show All</span><span class="close">${cross(22, 2.4)}</span>`;
  }
}

@customElement("mac-dock")
export class MacDock extends LitElement {
  static styles = css`
    :host { display: flex; width: 2707px; height: 126px; margin: 4px 0 0 87px; box-sizing: border-box; border: 2px solid #353535; border-radius: 35px; background: #111; padding-left: 3px; font-family: Inter, "Liberation Sans", sans-serif; }
    .slot { position: relative; display: flex; justify-content: center; width: 104.100px; height: 122px; }
    .open { width: 104px; }
    .tile { display: block; margin-top: 17px; overflow: visible; }
    .tile.rocket { margin-top: 11px; }
    .tile.round { margin-top: 8px; }
    .tile.bin { margin-top: 13px; }
    .badge { position: absolute; left: 65.500px; top: 8px; width: 36px; height: 36px; border-radius: 50%; background: rgba(232, 77, 61, 0.930); color: #fff; font-size: 21px; line-height: 36px; text-align: center; }
    .dot { position: absolute; left: 48px; top: 112px; width: 8px; height: 8px; border-radius: 50%; background: #8e8e8e; }
    .divider { width: 2px; height: 94px; margin: 14px 20px 0 24px; background: #4a4a4a; }
    .divider.last { margin-right: 22px; }
    .petal { mix-blend-mode: multiply; }
    .shield { font: 700 11.500px Inter, sans-serif; fill: #fff; }
    .month { font: 600 15.500px Inter, sans-serif; fill: #fff; }
    .day { font: 300 49px Inter, sans-serif; fill: #1e1e1e; letter-spacing: -2px; }
    .tv { font: 500 33px Inter, sans-serif; fill: #fff; }
    .quote { font: 700 55px "Liberation Serif", serif; fill: #eeab45; }
    .r { font: 400 59px "DejaVu Serif", serif; fill: #fff; }
  `;
  private slotFor(app: DockApp, cls = "") {
    return html`<div class="slot ${cls}">${app.art}
      ${app.badge ? html`<span class="badge">${app.badge}</span>` : nothing}
      ${app.running ? html`<span class="dot"></span>` : nothing}</div>`;
  }
  render() {
    return html`${APPS.map((a) => this.slotFor(a))}<span class="divider"></span>
      ${OPEN_APPS.map((a) => this.slotFor(a, "open"))}<span class="divider last"></span>${this.slotFor({ art: bin }, "open")}`;
  }
}

@customElement("app-root")
export class AppRoot extends LitElement {
  static styles = css`
    :host { display: block; width: 2880px; height: 1800px; background: #000; overflow: hidden; }
    .window { position: relative; height: 1610px; box-sizing: border-box; padding-top: 2px; border-radius: 20px; overflow: hidden; background: #202124; }
    .window::after { content: ""; position: absolute; inset: 0; border: 2px solid rgba(255, 255, 255, 0.240); border-top-color: #67686b; border-radius: 20px; pointer-events: none; }
  `;
  render() {
    return html`
      <mac-menubar></mac-menubar>
      <div class="window">
        <browser-tabs></browser-tabs>
        <browser-toolbar></browser-toolbar>
        <repo-file></repo-file>
        <download-shelf></download-shelf>
      </div>
      <mac-dock></mac-dock>`;
  }
}
